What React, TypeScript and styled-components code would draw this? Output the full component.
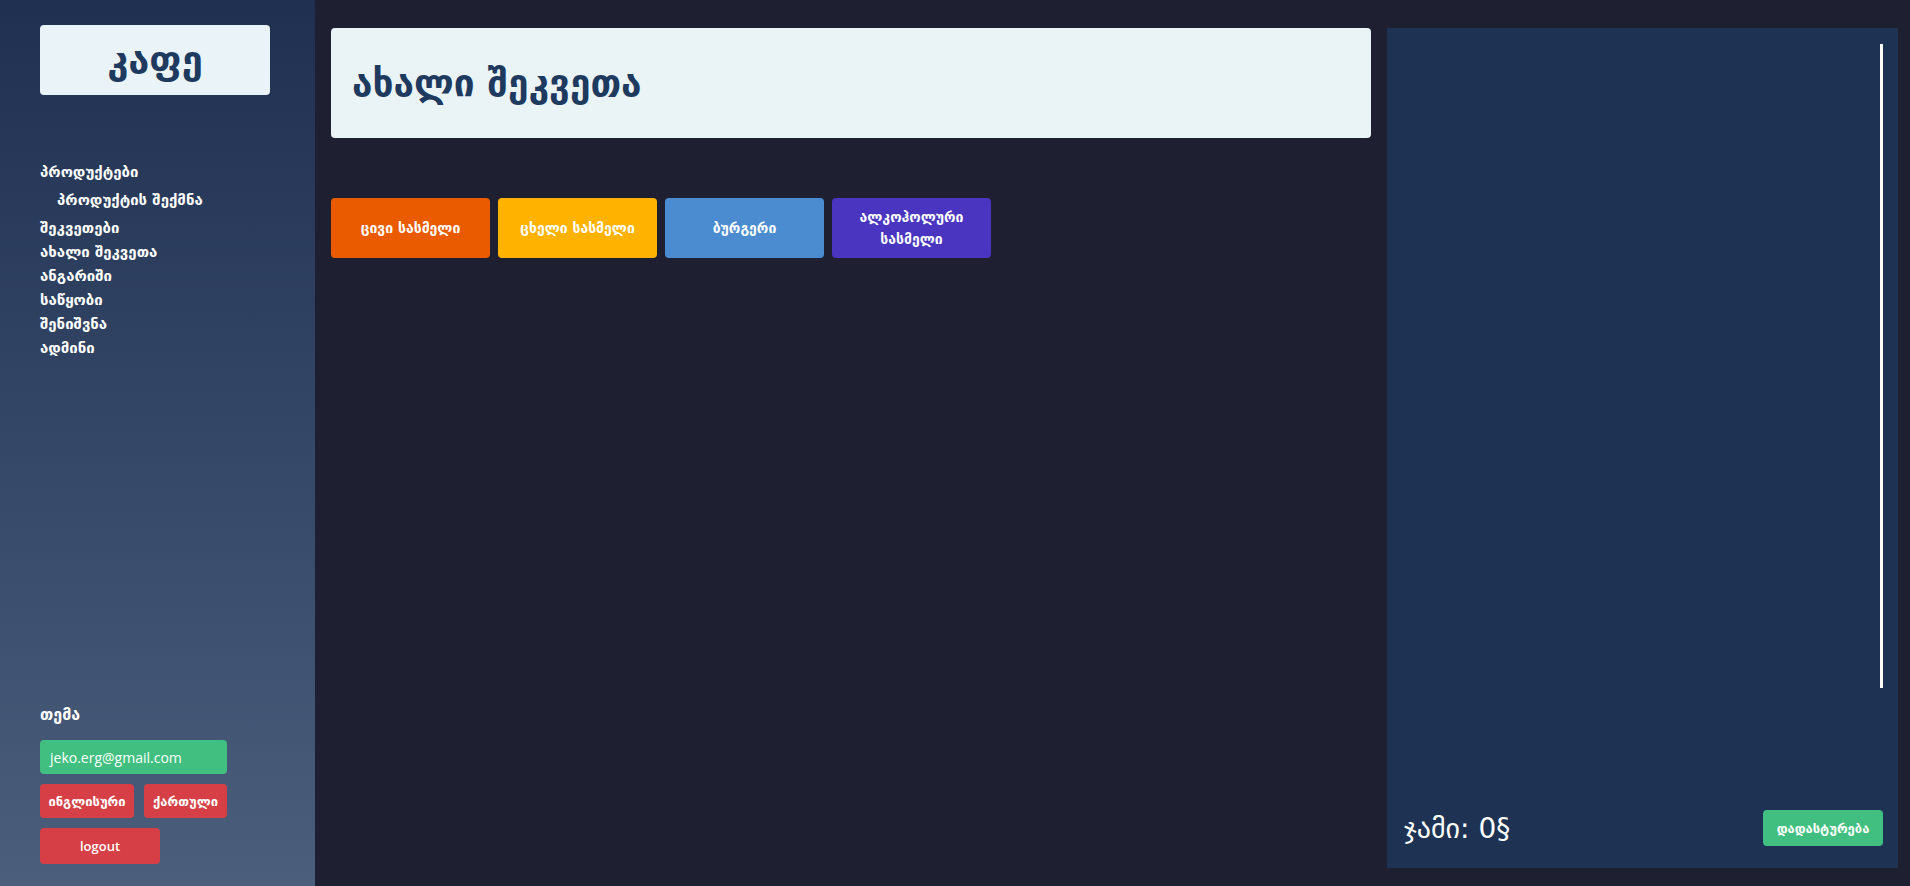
import React from "react";
import styled, { createGlobalStyle } from "styled-components";

const Global = createGlobalStyle`
  html, body { margin: 0; padding: 0; }
  body {
    background: #1e1f31;
    font-family: "Open Sans", "DejaVu Sans", sans-serif;
    -webkit-font-smoothing: antialiased;
  }
  * { box-sizing: border-box; }
`;

const Layout = styled.div`
  display: grid;
  grid-template-columns: 315px 1fr;
  height: 886px;
  width: 1910px;
`;

const Sidebar = styled.aside`
  display: flex;
  flex-direction: column;
  padding: 25px 40px 22px;
  background: linear-gradient(180deg, #1f3050 0%, #4b5e7c 100%);
`;

const Logo = styled.div`
  width: 230px;
  height: 70px;
  display: flex;
  align-items: center;
  justify-content: center;
  background: #eaf3f7;
  border-radius: 4px;
  color: #1e3a5f;
  font-family: "DejaVu Sans", sans-serif;
  font-size: 38px;
  font-weight: 600;
`;

const Nav = styled.nav`
  display: flex;
  flex-direction: column;
  margin-top: 65px;
`;

const NavLink = styled.a<{ $sub?: boolean }>`
  color: #ffffff;
  font-family: "DejaVu Sans", sans-serif;
  font-size: 15px;
  font-weight: 700;
  line-height: ${(p) => (p.$sub ? "32px" : "24px")};
  padding-left: ${(p) => (p.$sub ? "17px" : "0")};
  text-decoration: none;
  cursor: pointer;
`;

const Bottom = styled.div`
  margin-top: auto;
  display: flex;
  flex-direction: column;
  align-items: flex-start;
  gap: 10px;
`;

const ThemeLabel = styled.div`
  color: #ffffff;
  font-family: "DejaVu Sans", sans-serif;
  font-size: 16px;
  font-weight: 600;
  line-height: 20px;
  margin-bottom: 5px;
`;

const Row = styled.div`
  display: flex;
  gap: 10px;
`;

const SideButton = styled.button<{ $bg: string; $w: number; $h?: number; $left?: boolean }>`
  width: ${(p) => p.$w}px;
  height: ${(p) => p.$h ?? 34}px;
  background: ${(p) => p.$bg};
  color: #ffffff;
  border: none;
  border-radius: 4px;
  padding: 0 10px;
  display: flex;
  align-items: center;
  justify-content: ${(p) => (p.$left ? "flex-start" : "center")};
  font-family: "Open Sans", "DejaVu Sans", sans-serif;
  font-size: ${(p) => (p.$left ? "14px" : "13px")};
  font-weight: ${(p) => (p.$left ? 500 : 600)};
  white-space: nowrap;
  cursor: pointer;
`;

const Main = styled.main`
  display: flex;
  gap: 16px;
  padding: 28px 12px 18px 16px;
  min-width: 0;
`;

const Content = styled.section`
  flex: 1;
  display: flex;
  flex-direction: column;
  min-width: 0;
`;

const HeaderCard = styled.div`
  height: 110px;
  background: #eaf4f7;
  border-radius: 4px;
  display: flex;
  align-items: center;
  padding: 0 21px;
`;

const Title = styled.h1`
  margin: 0;
  color: #1e3a5f;
  font-family: "DejaVu Sans", sans-serif;
  font-size: 37px;
  font-weight: 600;
`;

const Categories = styled.div`
  display: flex;
  gap: 8px;
  margin-top: 60px;
`;

const CategoryButton = styled.button<{ $bg: string }>`
  width: 159px;
  height: 60px;
  background: ${(p) => p.$bg};
  border: none;
  border-radius: 4px;
  color: #ffffff;
  font-family: "DejaVu Sans", sans-serif;
  font-size: 14px;
  font-weight: 700;
  line-height: 22px;
  padding: 0 14px;
  text-align: center;
  cursor: pointer;
`;

const OrderPanel = styled.aside`
  width: 511px;
  background: #1e3353;
  display: flex;
  flex-direction: column;
  padding: 16px 15px 22px 17px;
`;

const OrderList = styled.div`
  height: 644px;
  border-right: 3px solid #ffffff;
`;

const OrderFooter = styled.div`
  margin-top: auto;
  display: flex;
  align-items: center;
  justify-content: space-between;
`;

const Total = styled.div`
  color: #ffffff;
  font-family: "DejaVu Sans", sans-serif;
  font-size: 28px;
  font-weight: 500;
`;

const ConfirmButton = styled.button`
  width: 120px;
  height: 36px;
  background: #41bf80;
  border: none;
  border-radius: 4px;
  color: #ffffff;
  font-family: "DejaVu Sans", sans-serif;
  font-size: 13px;
  font-weight: 600;
  padding: 0;
  cursor: pointer;
`;

const navItems: { label: string; sub?: boolean }[] = [
  { label: "პროდუქტები" },
  { label: "პროდუქტის შექმნა", sub: true },
  { label: "შეკვეთები" },
  { label: "ახალი შეკვეთა" },
  { label: "ანგარიში" },
  { label: "საწყობი" },
  { label: "შენიშვნა" },
  { label: "ადმინი" },
];

const categories = [
  { label: "ცივი სასმელი", color: "#ea5b00" },
  { label: "ცხელი სასმელი", color: "#ffb300" },
  { label: "ბურგერი", color: "#4a8ccf" },
  { label: "ალკოჰოლური სასმელი", color: "#4a35c0" },
];

export default function App() {
  return (
    <>
      <Global />
      <Layout>
        <Sidebar>
          <Logo>კაფე</Logo>
          <Nav>
            {navItems.map((n) => (
              <NavLink key={n.label} $sub={n.sub}>
                {n.label}
              </NavLink>
            ))}
          </Nav>
          <Bottom>
            <ThemeLabel>თემა</ThemeLabel>
            <SideButton $bg="#41bf80" $w={187} $left>
              jeko.erg@gmail.com
            </SideButton>
            <Row>
              <SideButton $bg="#d73f46" $w={94}>
                ინგლისური
              </SideButton>
              <SideButton $bg="#d73f46" $w={83}>
                ქართული
              </SideButton>
            </Row>
            <SideButton $bg="#d73f46" $w={120} $h={36}>
              logout
            </SideButton>
          </Bottom>
        </Sidebar>
        <Main>
          <Content>
            <HeaderCard>
              <Title>ახალი შეკვეთა</Title>
            </HeaderCard>
            <Categories>
              {categories.map((c) => (
                <CategoryButton key={c.label} $bg={c.color}>
                  {c.label}
                </CategoryButton>
              ))}
            </Categories>
          </Content>
          <OrderPanel>
            <OrderList />
            <OrderFooter>
              <Total>ჯამი: 0§</Total>
              <ConfirmButton>დადასტურება</ConfirmButton>
            </OrderFooter>
          </OrderPanel>
        </Main>
      </Layout>
    </>
  );
}
